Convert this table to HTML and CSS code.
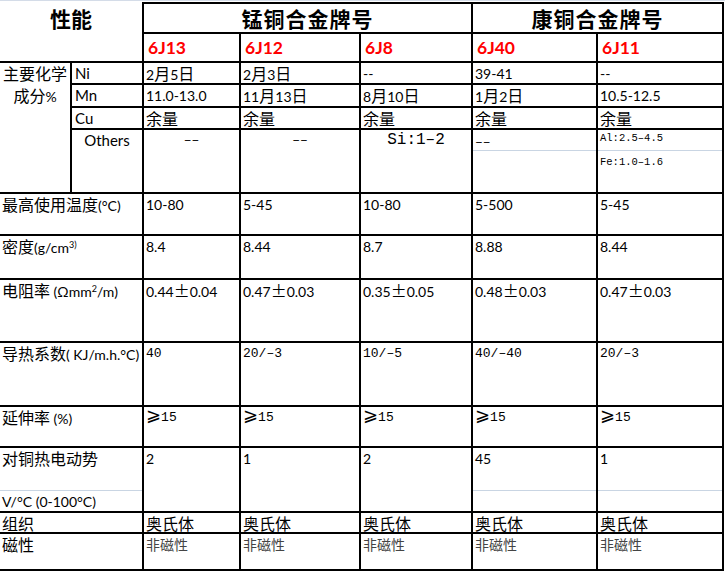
FILE: index.html
```html
<!DOCTYPE html>
<html lang="zh">
<head>
<meta charset="utf-8">
<title>合金性能表</title>
<link rel="stylesheet" href="styles.css">
</head>
<body>
<div class="sheet">
  <div class="grid">
    <div class="c s2 r2 hl">性能</div>
    <div class="c s3 hd">锰铜合金牌号</div>
    <div class="c s2 hd">康铜合金牌号</div>

    <div class="c gr">6J13</div>
    <div class="c gr">6J12</div>
    <div class="c gr">6J8</div>
    <div class="c gr">6J40</div>
    <div class="c gr">6J11</div>

    <div class="c r4 comp"><span class="z">主要化学</span><br><span class="z">成分</span>%</div>
    <div class="c el">Ni</div>
    <div class="c">2<span class="z">月</span>5<span class="z">日</span></div>
    <div class="c">2<span class="z">月</span>3<span class="z">日</span></div>
    <div class="c">--</div>
    <div class="c">39-41</div>
    <div class="c">--</div>

    <div class="c el">Mn</div>
    <div class="c">11.0-13.0</div>
    <div class="c">11<span class="z">月</span>13<span class="z">日</span></div>
    <div class="c">8<span class="z">月</span>10<span class="z">日</span></div>
    <div class="c">1<span class="z">月</span>2<span class="z">日</span></div>
    <div class="c">10.5-12.5</div>

    <div class="c el">Cu</div>
    <div class="c"><span class="z">余量</span></div>
    <div class="c"><span class="z">余量</span></div>
    <div class="c"><span class="z">余量</span></div>
    <div class="c"><span class="z">余量</span></div>
    <div class="c"><span class="z">余量</span></div>

    <div class="c el ctr">Others</div>
    <div class="c ctr m">––</div>
    <div class="c ctr m">––</div>
    <div class="c ctr mb">Si:1–2</div>
    <div class="c split"><div class="sub"><span class="m">––</span></div></div>
    <div class="c split"><div class="sub ms">Al:2.5–4.5</div><div class="ms lo">Fe:1.0–1.6</div></div>

    <div class="c s2"><span class="z">最高使用温度</span>(°C)</div>
    <div class="c">10-80</div>
    <div class="c">5-45</div>
    <div class="c">10-80</div>
    <div class="c">5-500</div>
    <div class="c">5-45</div>

    <div class="c s2"><span class="z">密度</span>(g/cm<sup>3)</sup></div>
    <div class="c">8.4</div>
    <div class="c">8.44</div>
    <div class="c">8.7</div>
    <div class="c">8.88</div>
    <div class="c">8.44</div>

    <div class="c s2"><span class="z">电阻率</span> (Ωmm<sup>2</sup>/m)</div>
    <div class="c">0.44<span class="z">±</span>0.04</div>
    <div class="c">0.47<span class="z">±</span>0.03</div>
    <div class="c">0.35<span class="z">±</span>0.05</div>
    <div class="c">0.48<span class="z">±</span>0.03</div>
    <div class="c">0.47<span class="z">±</span>0.03</div>

    <div class="c s2"><span class="z">导热系数</span>( KJ/m.h.°C)</div>
    <div class="c m">40</div>
    <div class="c m">20/–3</div>
    <div class="c m">10/–5</div>
    <div class="c m">40/–40</div>
    <div class="c m">20/–3</div>

    <div class="c s2"><span class="z">延伸率</span> (%)</div>
    <div class="c m"><span class="ge">⩾</span>15</div>
    <div class="c m"><span class="ge">⩾</span>15</div>
    <div class="c m"><span class="ge">⩾</span>15</div>
    <div class="c m"><span class="ge">⩾</span>15</div>
    <div class="c m"><span class="ge">⩾</span>15</div>

    <div class="c s2 split"><div class="sub tall"><span class="z">对铜热电动势</span></div><div class="lo2">V/°C (0-100°C)</div></div>
    <div class="c">2</div>
    <div class="c">1</div>
    <div class="c">2</div>
    <div class="c split"><div class="sub tall">45</div></div>
    <div class="c split"><div class="sub tall">1</div></div>

    <div class="c s2"><span class="z">组织</span></div>
    <div class="c"><span class="z">奥氏体</span></div>
    <div class="c"><span class="z">奥氏体</span></div>
    <div class="c"><span class="z">奥氏体</span></div>
    <div class="c"><span class="z">奥氏体</span></div>
    <div class="c"><span class="z">奥氏体</span></div>

    <div class="c s2"><span class="z">磁性</span></div>
    <div class="c"><span class="zg">非磁性</span></div>
    <div class="c"><span class="zg">非磁性</span></div>
    <div class="c"><span class="zg">非磁性</span></div>
    <div class="c"><span class="zg">非磁性</span></div>
    <div class="c"><span class="zg">非磁性</span></div>
  </div>
</div>
</body>
</html>
```
FILE: styles.css
```css
html, body {
  margin: 0;
  padding: 0;
  background: #ffffff;
}

.sheet {
  width: 725px;
  height: 572px;
  box-sizing: border-box;
  border-top: 1px solid #d4dce8;
  padding-top: 1px;
  overflow: hidden;
}

.grid {
  display: grid;
  grid-template-columns: 72px 72px 97px 120px 112px 125px 126px;
  grid-template-rows: 32px 29px 22px 23px 22px 64px 42px 44px 63px 64px 41px 65px 21px 37px;
}

.c {
  box-sizing: border-box;
  border-right: 2px solid #000;
  border-bottom: 2px solid #000;
  padding: 0 0 0 2px;
  font-family: Lato, "Noto Sans CJK SC", sans-serif;
  font-size: 14px;
  line-height: 21px;
  color: #000;
  white-space: nowrap;
  min-width: 0;
}

.s2 { grid-column: span 2; }
.s3 { grid-column: span 3; }
.r2 { grid-row: span 2; }
.r4 { grid-row: span 4; }

.hl {
  font-family: "Noto Sans CJK SC", sans-serif;
  font-weight: 700;
  font-size: 21px;
  line-height: 32px;
  text-align: center;
  padding: 0;
}

.hd {
  border-top: 2px solid #000;
  font-family: "Noto Sans CJK SC", sans-serif;
  font-weight: 700;
  font-size: 21px;
  line-height: 28px;
  letter-spacing: 1px;
  text-align: center;
  padding: 0;
}

.gr {
  color: #ff0000;
  font-weight: 700;
  font-size: 17.5px;
  line-height: 27px;
  padding-left: 4px;
}

.comp {
  text-align: center;
  padding: 0;
  line-height: 21px;
}

.el {
  font-size: 15px;
  padding-left: 3px;
}

.ctr {
  text-align: center;
  padding-left: 0;
}

.z {
  font-family: "Noto Sans CJK SC", sans-serif;
  font-size: 16px;
}

.zg {
  font-family: "Noto Sans CJK SC", sans-serif;
  font-size: 14px;
  color: #444444;
}

.m {
  font-family: "Liberation Mono", "DejaVu Sans", monospace;
  font-size: 13px;
}

.mb {
  font-family: "Liberation Mono", "DejaVu Sans", monospace;
  font-size: 16px;
}

.ms {
  font-family: "Liberation Mono", monospace;
  font-size: 10.5px;
  line-height: 16px;
}

.ge {
  font-family: "DejaVu Sans", sans-serif;
  font-size: 18px;
  line-height: 0;
}

.split {
  padding-left: 0;
}

.split .sub,
.split .lo,
.split .lo2 {
  padding-left: 2px;
}

.sub {
  height: 21px;
  box-sizing: border-box;
  border-bottom: 1px solid #c9d5e3;
}

.sub.tall {
  height: 43px;
}

.lo {
  padding-top: 3px;
}

.lo2 {
  padding-top: 1px;
  line-height: 20px;
}

sup {
  font-size: 9px;
  line-height: 0;
  vertical-align: 5px;
}
```
